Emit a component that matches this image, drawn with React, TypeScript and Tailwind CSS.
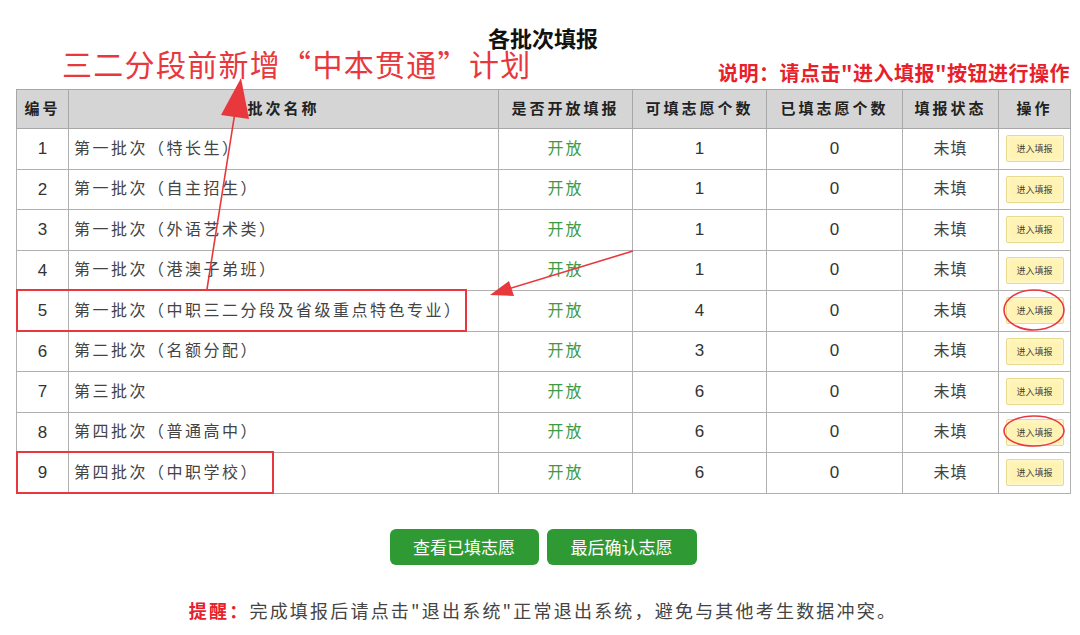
import React from 'react';

const rows = [
    { id: 1, name: '第一批次（特长生）', quota: 1 },
    { id: 2, name: '第一批次（自主招生）', quota: 1 },
    { id: 3, name: '第一批次（外语艺术类）', quota: 1 },
    { id: 4, name: '第一批次（港澳子弟班）', quota: 1 },
    { id: 5, name: '第一批次（中职三二分段及省级重点特色专业）', quota: 4 },
    { id: 6, name: '第二批次（名额分配）', quota: 3 },
    { id: 7, name: '第三批次', quota: 6 },
    { id: 8, name: '第四批次（普通高中）', quota: 6 },
    { id: 9, name: '第四批次（中职学校）', quota: 6 },
];

const headers = ['编号', '批次名称', '是否开放填报', '可填志愿个数', '已填志愿个数', '填报状态', '操作'];

// red marks drawn on top of the screenshot
const Annotations: React.FC = () => (
    <svg className="absolute top-0 left-0 pointer-events-none" width="1080" height="635" viewBox="0 0 1080 635">
        <line x1="207" y1="289" x2="235" y2="112" stroke="#e8383d" strokeWidth="1.6" />
        <polygon points="241,78 221,115 249,119" fill="#e8383d" />
        <line x1="633" y1="251" x2="508" y2="289" stroke="#e8383d" strokeWidth="1.6" />
        <polygon points="490,295 509,281 514,296" fill="#e8383d" />
        <rect x="17" y="290" width="449" height="41" fill="none" stroke="#e8383d" strokeWidth="2" />
        <rect x="17" y="452" width="256" height="41" fill="none" stroke="#e8383d" strokeWidth="2" />
        <ellipse cx="1034" cy="310" rx="30" ry="20" fill="none" stroke="#e8383d" strokeWidth="1.6" />
        <ellipse cx="1034" cy="431" rx="30" ry="15" fill="none" stroke="#e8383d" strokeWidth="1.6" />
    </svg>
);

const num = { fontFamily: '"Liberation Sans", sans-serif' };

export default function App() {
    return (
        <div className="relative w-[1080px] h-[635px] bg-white overflow-hidden px-[16px] text-[#333]" style={{ fontFamily: '"Noto Sans CJK SC", "Liberation Sans", sans-serif' }}>
            <div className="w-[1054px]">
                <div className="pt-[25px] text-center text-[22px] leading-[24px] font-bold text-[#111]">各批次填报</div>

                <div className="h-[39px] flex justify-between">
                    <div className="ml-[46px] text-[30px] leading-[28px] tracking-[1.3px] text-[#e8383d]">三二分段前新增“中本贯通”计划</div>
                    <div className="self-end mb-[5px] text-[20px] leading-[20px] tracking-[0.5px] font-bold text-[#e8202a]">说明：请点击"进入填报"按钮进行操作</div>
                </div>

                <table className="mt-[1px] w-[1054px] table-fixed border-collapse">
                    <colgroup>
                        <col className="w-[52px]" />
                        <col className="w-[430px]" />
                        <col className="w-[134px]" />
                        <col className="w-[134px]" />
                        <col className="w-[136px]" />
                        <col className="w-[96px]" />
                        <col className="w-[72px]" />
                    </colgroup>
                    <thead>
                        <tr className="h-[39px] bg-[#d5d5d5]">
                            {headers.map((h) => (
                                <th key={h} className="border border-[#a8a8a8] text-center text-[15px] font-bold text-[#222] tracking-[3px] p-0 pb-[1px]">
                                    {h}
                                </th>
                            ))}
                        </tr>
                    </thead>
                    <tbody>
                        {rows.map((r) => (
                            <tr key={r.id} className="h-[40.5px]">
                                <td className="border border-[#b0b0b0] text-center text-[17px] p-0" style={num}>{r.id}</td>
                                <td className="border border-[#b0b0b0] pl-[5px] pb-[4px] text-[16px] tracking-[2.5px] text-[#444] whitespace-nowrap">{r.name}</td>
                                <td className="border border-[#b0b0b0] pb-[4px] text-center text-[16px] tracking-[2px] text-[#3f9a45]">开放</td>
                                <td className="border border-[#b0b0b0] pb-[1px] text-center text-[17px]" style={num}>{r.quota}</td>
                                <td className="border border-[#b0b0b0] pb-[1px] text-center text-[17px]" style={num}>0</td>
                                <td className="border border-[#b0b0b0] pb-[4px] text-center text-[16px] tracking-[1px] text-[#444]">未填</td>
                                <td className="border border-[#b0b0b0] p-0">
                                    <div className="flex justify-center">
                                        <button className="w-[58px] h-[27px] bg-[#fff3b4] border border-[#e9d98d] rounded-[2px] text-[9px] text-[#444] shadow-[inset_0_0_4px_#fffbe0]">
                                            进入填报
                                        </button>
                                    </div>
                                </td>
                            </tr>
                        ))}
                    </tbody>
                </table>

                <div className="mt-[35px] flex justify-center gap-[8px]">
                    <button className="w-[149px] h-[36px] rounded-[6px] bg-[#2f9a33] text-white text-[17px]">查看已填志愿</button>
                    <button className="w-[150px] h-[36px] rounded-[6px] bg-[#2f9a33] text-white text-[17px]">最后确认志愿</button>
                </div>

                <div className="mt-[34px] text-center text-[18px] leading-[22px] tracking-[2.2px] text-[#444]">
                    <span className="font-bold text-[#e8202a]">提醒：</span>
                    完成填报后请点击"退出系统"正常退出系统，避免与其他考生数据冲突。
                </div>
            </div>
            <Annotations />
        </div>
    );
}
